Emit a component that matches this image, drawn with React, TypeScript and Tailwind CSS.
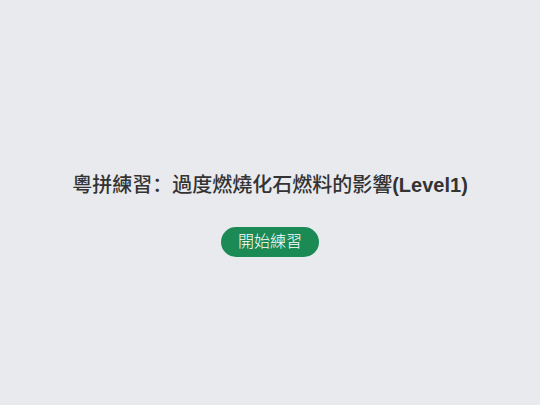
export default function App() {
  return (
    <div
      className="min-h-screen w-full bg-[#e9eaee] flex flex-col items-center justify-center pt-[22px]"
      style={{ fontFamily: '"Liberation Sans", "Noto Sans CJK SC", sans-serif' }}
    >
      <h1 className="text-[20px] leading-[28px] text-[#333333]">
        <span className="font-medium">粵拼練習：過度燃燒化石燃料的影響</span>
        <span className="font-bold">(Level1)</span>
      </h1>
      <button className="mt-[28px] h-[30px] px-[17px] rounded-full bg-[#1b8a55] text-white text-[16px] leading-none font-light">
        開始練習
      </button>
    </div>
  )
}
